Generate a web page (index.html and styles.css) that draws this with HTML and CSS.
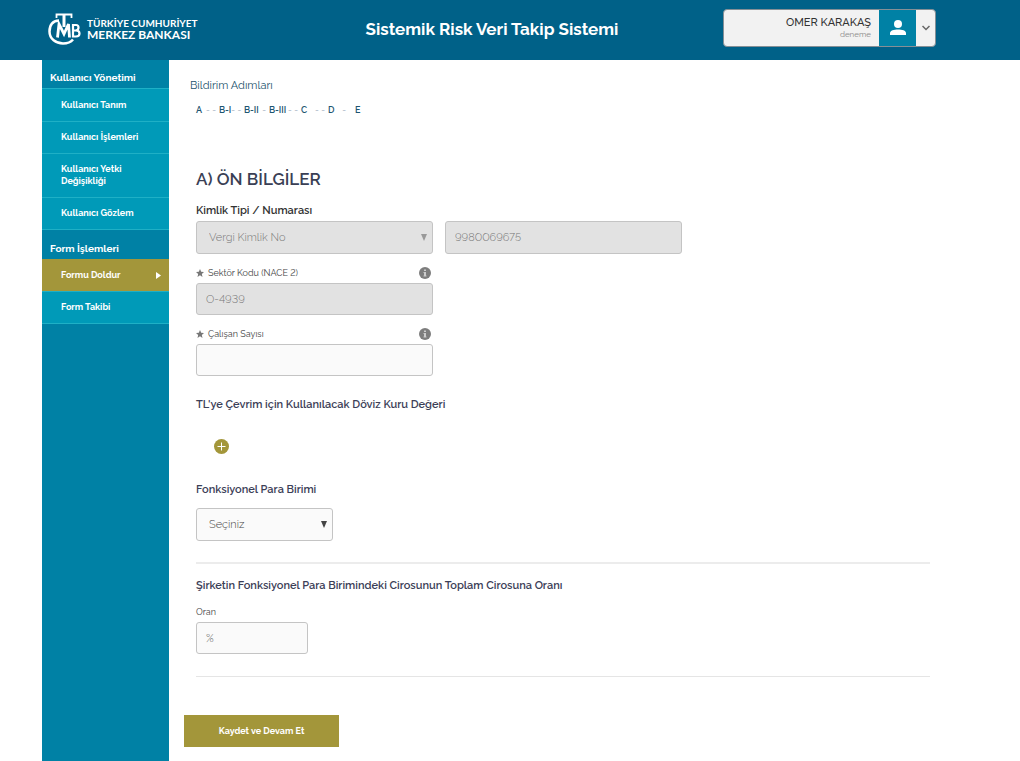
FILE: index.html
```html
<!DOCTYPE html>
<html lang="tr">
<head>
<meta charset="utf-8">
<title>Sistemik Risk Veri Takip Sistemi</title>
<link rel="stylesheet" href="styles.css">
</head>
<body>
<header class="topbar">
  <div class="brand">
    <svg class="brand-mark" viewBox="0 0 34 32" aria-hidden="true">
      <g fill="none" stroke="#fff">
        <path d="M11 7.500C4 8 1.500 13 1.500 18.500C1.500 26 8 30.500 15 30.500C20 30.500 23 29 25 26.500" stroke-width="2.500"/>
        <path d="M8.500 5V1.500H23.500V5" stroke-width="1.800"/>
        <path d="M16 1.500V14" stroke-width="3"/>
        <path d="M9.500 24.500L11 11L16 21L20.500 11L21.500 24.500" stroke-width="2.800"/>
        <path d="M25 12V23.500H28Q31.500 23.500 31.500 20.500Q31.500 17.500 28 17.500H25H28Q30.500 17 30.500 14.500Q30.500 12 28 12Z" stroke-width="2.200"/>
      </g>
    </svg>
    <p class="brand-name">TÜRKİYE CUMHURİYET<br><span class="brand-second">MERKEZ BANKASI</span></p>
  </div>
  <h1 class="app-title">Sistemik Risk Veri Takip Sistemi</h1>
  <button class="user" type="button">
    <span class="user-text"><span class="user-name">OMER KARAKAŞ</span><span class="user-role">deneme</span></span>
    <span class="user-avatar"><svg width="16" height="16" viewBox="0 0 16 16" fill="#fff" aria-hidden="true"><circle cx="8" cy="4" r="4"/><path d="M0 15V13C0 10.500 4 9.500 8 9.500S16 10.500 16 13V15Z"/></svg></span>
    <span class="user-toggle"><svg width="8" height="6" viewBox="0 0 8 6" fill="none" stroke="#666" stroke-width="1.500" aria-hidden="true"><path d="M.5 1L4 4.500L7.500 1"/></svg></span>
  </button>
</header>
<div class="shell">
  <nav class="sidebar">
    <h2 class="nav-heading">Kullanıcı Yönetimi</h2>
    <a class="nav-item" href="#">Kullanıcı Tanım</a>
    <a class="nav-item" href="#">Kullanıcı İşlemleri</a>
    <a class="nav-item" href="#">Kullanıcı Yetki Değişikliği</a>
    <a class="nav-item" href="#">Kullanıcı Gözlem</a>
    <h2 class="nav-heading">Form İşlemleri</h2>
    <a class="nav-item nav-active" href="#">Formu Doldur <svg width="5" height="7" viewBox="0 0 5 7" fill="#fff" aria-hidden="true"><path d="M0 0L5 3.500L0 7Z"/></svg></a>
    <a class="nav-item" href="#">Form Takibi</a>
  </nav>
  <main class="content">
    <p class="steps-title">Bildirim Adımları</p>
    <ol class="steps">
      <li>A<span class="dash">- -</span></li>
      <li>B-I<span class="dash">- -</span></li>
      <li>B-II<span class="dash">-</span></li>
      <li>B-III<span class="dash">- -</span></li>
      <li>C<span class="dash">- -</span></li>
      <li>D<span class="dash dash-single">-</span></li>
      <li>E</li>
    </ol>
    <form class="form">
      <h2 class="form-title">A) ÖN BİLGİLER</h2>
      <label class="group-label group-dark" for="idtype">Kimlik Tipi / Numarası</label>
      <div class="row">
        <div class="select-wrap wide"><select class="control" id="idtype" disabled><option>Vergi Kimlik No</option></select><svg class="arrow" width="6" height="7" viewBox="0 0 6 7" fill="#999" aria-hidden="true"><path d="M0 0H6L3 7Z"/></svg></div>
        <input class="control wide" type="text" value="9980069675" aria-label="Numara" disabled>
      </div>
      <div class="field wide">
        <div class="field-head">
          <svg width="8" height="8" viewBox="0 0 24 24" fill="#777" aria-hidden="true"><path d="M12 0L15.500 8.500L24 9L17.500 15L19.500 24L12 19L4.500 24L6.500 15L0 9L8.500 8.500Z"/></svg>
          <label for="sector">Sektör Kodu (NACE 2)</label>
          <svg class="info" width="12" height="12" viewBox="0 0 12 12" aria-hidden="true"><circle cx="6" cy="6" r="6" fill="#7d7d7d"/><path d="M5 2.500H7V4H5ZM4.500 5H7V8.500H7.500V9.500H4.500V8.500H5V6H4.500Z" fill="#ccc"/></svg>
        </div>
        <input class="control" id="sector" type="text" value="O-4939" disabled>
      </div>
      <div class="field wide">
        <div class="field-head">
          <svg width="8" height="8" viewBox="0 0 24 24" fill="#777" aria-hidden="true"><path d="M12 0L15.500 8.500L24 9L17.500 15L19.500 24L12 19L4.500 24L6.500 15L0 9L8.500 8.500Z"/></svg>
          <label for="staff">Çalışan Sayısı</label>
          <svg class="info" width="12" height="12" viewBox="0 0 12 12" aria-hidden="true"><circle cx="6" cy="6" r="6" fill="#7d7d7d"/><path d="M5 2.500H7V4H5ZM4.500 5H7V8.500H7.500V9.500H4.500V8.500H5V6H4.500Z" fill="#ccc"/></svg>
        </div>
        <input class="control" id="staff" type="text">
      </div>
      <h3 class="group-label rate-title">TL'ye Çevrim için Kullanılacak Döviz Kuru Değeri</h3>
      <button class="add" type="button" aria-label="Ekle"><svg width="15" height="15" viewBox="0 0 15 15" aria-hidden="true"><circle cx="7.500" cy="7.500" r="7.500" fill="#a3963a"/><path d="M3.500 7.500H11.500M7.500 3.500V11.500" stroke="#fff"/></svg></button>
      <label class="group-label" for="currency">Fonksiyonel Para Birimi</label>
      <div class="select-wrap currency"><select class="control" id="currency"><option>Seçiniz</option></select><svg class="arrow" width="6" height="7" viewBox="0 0 6 7" fill="#444" aria-hidden="true"><path d="M0 0H6L3 7Z"/></svg></div>
      <hr class="rule rule-thick">
      <h3 class="group-label">Şirketin Fonksiyonel Para Birimindeki Cirosunun Toplam Cirosuna Oranı</h3>
      <div class="field ratio">
        <div class="field-head"><label for="ratio">Oran</label></div>
        <input class="control" id="ratio" type="text" placeholder="%">
      </div>
      <hr class="rule">
      <button class="submit" type="submit">Kaydet ve Devam Et</button>
    </form>
  </main>
</div>
</body>
</html>
```
FILE: styles.css
```css
* { box-sizing: border-box; }
body {
  margin: 0;
  min-height: 100vh;
  display: flex;
  flex-direction: column;
  background: #fff;
  color: #3a3f55;
  font-family: Raleway, Lato, sans-serif;
  font-size: 11px;
  line-height: 12px;
  font-variant-numeric: lining-nums;
}
h1, h2, h3, p, ol { margin: 0; padding: 0; }
button, input, select { font: inherit; font-variant-numeric: lining-nums; }

.topbar {
  display: grid;
  grid-template-columns: 1fr auto 1fr;
  align-items: center;
  height: 60px;
  padding: 0 84px 4px 48px;
  background: #006188;
  color: #fff;
}
.brand { display: flex; align-items: center; gap: 5px; padding-top: 2px; }
.brand-mark { width: 34px; height: 32px; }
.brand-name { font: 700 10px/12px Lato, sans-serif; white-space: nowrap; }
.brand-second { font-size: 12px; }
.app-title { padding-top: 2px; font-size: 17px; line-height: 20px; font-weight: 700; }
.user {
  justify-self: end;
  display: flex;
  width: 213px;
  height: 38px;
  padding: 0;
  overflow: hidden;
  border: 1px solid #858f96;
  border-radius: 4px;
  background: #f2f2f2;
  color: #333;
  text-align: right;
}
.user-text { flex: 1; display: flex; flex-direction: column; justify-content: center; padding-right: 8px; }
.user-name { font-weight: 500; line-height: 12px; }
.user-role { font-size: 8px; line-height: 10px; color: #888; }
.user-avatar { display: grid; place-items: center; width: 37px; background: #0081a5; }
.user-toggle { display: grid; place-items: center; width: 19px; }

.shell { flex: 1; display: flex; padding-left: 42px; }
.sidebar { flex: 0 0 127px; background: #0081a5; color: #fff; }
.nav-heading { padding: 12px 8px 4px; font-size: 10px; line-height: 12px; font-weight: 700; }
.nav-item + .nav-heading { border-top: 1px solid #1fb0c6; padding-top: 13px; }
.nav-item {
  display: flex;
  align-items: center;
  justify-content: space-between;
  padding: 10px 8px 10px 19px;
  border-top: 1px solid #1fb0c6;
  background: #009ab8;
  color: #fff;
  font-size: 9px;
  line-height: 12px;
  font-weight: 700;
  text-decoration: none;
}
.nav-item + .nav-item { padding-top: 9px; }
.nav-item:last-child { border-bottom: 1px solid #1fb0c6; }
.nav-item.nav-active { padding-top: 9px; background: #a3963a; border-color: #a3963a; }

.content { flex: 1; min-width: 0; padding: 20px 90px 14px 15px; }
.steps-title { margin-left: 6px; color: #22526c; font-weight: 400; }
.steps {
  display: grid;
  grid-template-columns: 23px 25px 25px 32px 27px 27px auto;
  margin: 12px 0 0 12px;
  list-style: none;
  color: #1d5570;
  font-size: 9px;
  font-weight: 600;
}
.steps li { display: flex; justify-content: space-between; white-space: nowrap; }
.dash { padding-right: 3px; color: #9ab; font-weight: 400; }
.dash-single { padding-right: 9px; }

.form { display: flex; flex-direction: column; align-items: flex-start; margin: 53px 0 0 12px; }
.form-title { font-size: 17px; line-height: 20px; font-weight: 600; }
.group-label { margin-top: 15px; font-size: 11px; line-height: 14px; font-weight: 600; color: #3c4057; }
.group-dark { color: #333; }
.row { display: flex; gap: 12px; margin-top: 3px; }
.wide { width: 237px; }
.control {
  display: block;
  width: 100%;
  height: 32px;
  padding: 0 9px;
  border: 1px solid #c4c4c4;
  border-radius: 3px;
  background: #fafafa;
  color: #444;
  font-weight: 300;
}
.row .control { height: 33px; }
.row .wide { width: 237px; }
.control:disabled { background: #e2e2e2; color: #777; opacity: 1; }
.control::placeholder { color: #555; }
.select-wrap { position: relative; }
.select-wrap .control { height: 33px; padding-left: 12px; appearance: none; }
.arrow { position: absolute; top: 13px; right: 6px; pointer-events: none; }
.field { margin-top: 13px; }
.field-head { display: flex; align-items: center; gap: 4px; height: 12px; margin-bottom: 4px; font-size: 9px; color: #444; }
.info { margin-left: auto; margin-right: 2px; }
.rate-title { margin-top: 22px; }
.add { display: block; margin: 27px 0 14px 18px; padding: 0; border: 0; background: none; line-height: 0; }
.currency { width: 137px; margin-top: 11px; }
.rule { width: 100%; height: 1px; margin: 22px 0 0; border: 0; background: #e5e5e5; }
.rule-thick { height: 2px; margin-top: 21px; background: #ececec; }
.ratio { width: 112px; margin-top: 13px; }
.submit {
  width: 155px;
  height: 32px;
  margin: 38px 0 0 -12px;
  border: 0;
  background: #a3963a;
  color: #fff;
  font-size: 9px;
  font-weight: 700;
}
```
